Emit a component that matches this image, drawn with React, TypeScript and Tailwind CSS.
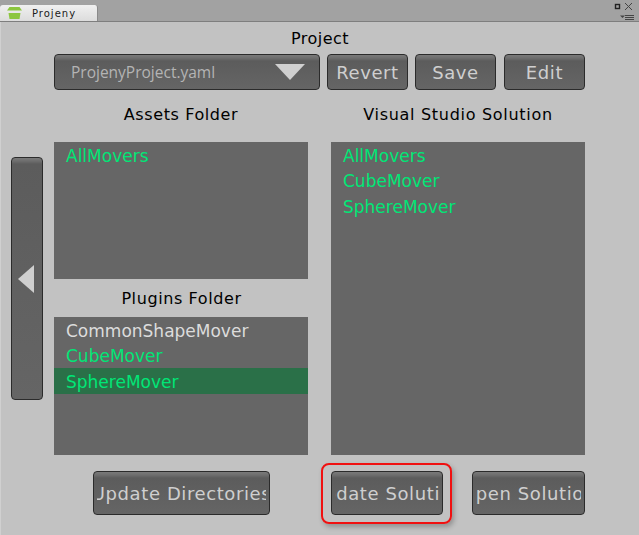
const font = "font-['DejaVu_Sans',sans-serif]";

function GreyButton({ label, className }: { label: string; className: string }) {
  return (
    <div
      className={`flex items-center justify-center rounded-[4px] border border-[#2b2b2b] bg-[linear-gradient(#7a7a7a_0px,#6e6e6e_3px,#5c5c5c_6px,#656565_100%)] ${className}`}
    >
      <div className="flex h-full flex-1 items-center justify-center overflow-hidden mx-[3px]">
        <span className="whitespace-nowrap text-[18px] tracking-[0.6px] text-[#cfcfcf]">{label}</span>
      </div>
    </div>
  );
}

function Row({ label, color, selected }: { label: string; color: string; selected?: boolean }) {
  return (
    <div className={`flex h-[25.5px] items-center pl-[12px] pt-[3px] text-[17px] ${color} ${selected ? "bg-[#2a7048]" : ""}`}>
      {label}
    </div>
  );
}

export default function App() {
  return (
    <div className={`relative flex h-[535px] w-[639px] flex-col overflow-hidden bg-[#c2c2c2] ${font}`}>
      {/* title bar */}
      <div className="flex h-[22px] items-end justify-between border-b border-[#7e7e7e] bg-[#a2a2a2]">
        <div className="flex h-[16px] w-[98px] items-center gap-[10px] rounded-t-[3px] border-r border-[#8a8a8a] bg-[linear-gradient(#f0f0f0,#dcdcdc)] pl-[7px]">
          <svg width="15" height="12" viewBox="0 0 15 12">
            <path d="M2.500 0h10l2.500 3.500H0z" fill="#8cc63f" />
            <rect x="0" y="4" width="15" height="1.500" fill="#e8e8e8" />
            <path d="M1.500 6h12l-1 6h-10z" fill="#8cc63f" />
          </svg>
          <span className="text-[10px] tracking-[1px] text-[#1a1a1a]">Projeny</span>
        </div>
        <div className="mr-[2px] flex h-[21px] w-[24px] flex-col items-end">
          <svg width="24" height="21" viewBox="0 0 24 21" fill="none">
            <rect x="2.500" y="4.500" width="4" height="4" stroke="#222" strokeWidth="1.400" />
            <path d="M12 3l7 7M19 3l-7 7" stroke="#444" strokeWidth="1" />
            <path d="M7 15.500h5l-2.500 2.500z" fill="#444" />
            <path d="M12 15.500h9M12 17.500h9M12 19.500h9" stroke="#444" strokeWidth="1" />
          </svg>
        </div>
      </div>

      {/* window body */}
      <div className="flex flex-1 flex-col border-l border-[#d0d0d0] pl-[10px] pr-[54px]">
        <div className="flex h-[32px] items-start justify-center pl-[10px] pt-[6px] text-[16px] leading-[22px] tracking-[0.5px] text-black">
          <span className="ml-[34px]">Project</span>
        </div>
        <div className="flex h-[36px] pl-[43px]">
          <div className="flex w-[266px] items-center justify-between rounded-[4px] border border-[#2b2b2b] bg-[linear-gradient(#7a7a7a_0px,#6e6e6e_3px,#5c5c5c_6px,#656565_100%)] pl-[16px] pr-[14px]">
            <span className="pt-[2px] font-['Open_Sans',sans-serif] text-[15.5px] text-[#b4b4b4]">ProjenyProject.yaml</span>
            <svg width="30" height="16" viewBox="0 0 30 16">
              <path d="M0 0h30L15 16z" fill="#cfcfcf" />
            </svg>
          </div>
          <GreyButton label="Revert" className="ml-[7px] w-[81px]" />
          <GreyButton label="Save" className="ml-[7px] w-[81px]" />
          <GreyButton label="Edit" className="ml-[8px] w-[81px]" />
        </div>

        <div className="flex flex-1 pt-[13px]">
          <div className="flex w-[43px] shrink-0 pt-[54px]">
            <div className="flex h-[243px] w-[32px] items-center justify-center rounded-[4px] border border-[#2b2b2b] bg-[linear-gradient(#7a7a7a_0px,#6e6e6e_3px,#5c5c5c_6px,#656565_100%)] pr-[2px]">
              <svg width="16" height="28" viewBox="0 0 16 28">
                <path d="M16 0v28L0 14z" fill="#cfcfcf" />
              </svg>
            </div>
          </div>

          <div className="flex w-[254px] flex-col">
            <div className="flex h-[39px] items-start justify-center pt-[1px] text-[16px] leading-[22px] tracking-[0.6px] text-black">
              Assets Folder
            </div>
            <div className="h-[137px] bg-[#666666]">
              <Row label="AllMovers" color="text-[#00e676]" />
            </div>
            <div className="flex h-[38px] items-center justify-center pl-[1px] pt-[2px] text-[16px] tracking-[0.6px] text-black">
              Plugins Folder
            </div>
            <div className="h-[138px] bg-[#666666]">
              <Row label="CommonShapeMover" color="text-[#dcdcdc]" />
              <Row label="CubeMover" color="text-[#00e676]" />
              <Row label="SphereMover" color="text-[#00e676]" selected />
            </div>
          </div>

          <div className="ml-[23px] flex w-[254px] flex-col">
            <div className="flex h-[39px] items-start justify-center pt-[1px] text-[16px] leading-[22px] tracking-[0.7px] text-black">
              Visual Studio Solution
            </div>
            <div className="h-[313px] bg-[#666666]">
              <Row label="AllMovers" color="text-[#00e676]" />
              <Row label="CubeMover" color="text-[#00e676]" />
              <Row label="SphereMover" color="text-[#00e676]" />
            </div>
          </div>
        </div>

        <div className="flex h-[64px] items-start pl-[82px]">
          <GreyButton label="Update Directories" className="h-[44px] w-[177px]" />
          <GreyButton label="Update Solution" className="ml-[61px] h-[44px] w-[112px]" />
          <GreyButton label="Open Solution" className="ml-[29px] h-[44px] w-[113px]" />
        </div>
      </div>

      {/* red callout drawn over the screenshot */}
      <div className="absolute left-[321px] top-[463px] h-[61px] w-[131px] rounded-[8px] border-2 border-[#f01010] shadow-[2px_3px_5px_rgba(0,0,0,0.25)]" />
    </div>
  );
}
